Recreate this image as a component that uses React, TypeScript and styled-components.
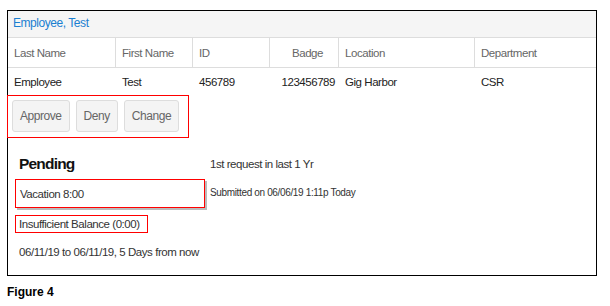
import styled, { createGlobalStyle } from "styled-components"

const GlobalStyle = createGlobalStyle`
    body {
        margin: 0;
        background: #fff;
        font-family: "Liberation Sans", Arial, sans-serif;
    }
`

const columns = [
    { label: "Last Name", value: "Employee" },
    { label: "First Name", value: "Test" },
    { label: "ID", value: "456789" },
    { label: "Badge", value: "123456789", right: true },
    { label: "Location", value: "Gig Harbor" },
    { label: "Department", value: "CSR" },
]

export default function App() {
    return (
        <Page>
            <GlobalStyle />
            <Frame>
                <Title>Employee, Test</Title>
                <Table>
                    {columns.map(col => (
                        <HeadCell key={col.label} $right={col.right}>{col.label}</HeadCell>
                    ))}
                    {columns.map(col => (
                        <DataCell key={col.label} $right={col.right}>{col.value}</DataCell>
                    ))}
                </Table>
                <Actions>
                    <ActionButton>Approve</ActionButton>
                    <ActionButton>Deny</ActionButton>
                    <ActionButton>Change</ActionButton>
                </Actions>
                <Request>
                    <Status>Pending</Status>
                    <Note>1st request in last 1 Yr</Note>
                    <TypeBox>Vacation 8:00</TypeBox>
                    <Submitted>Submitted on 06/06/19 1:11p Today</Submitted>
                    <Warning>Insufficient Balance (0:00)</Warning>
                    <Dates>06/11/19 to 06/11/19, 5 Days from now</Dates>
                </Request>
            </Frame>
            <Caption>Figure 4</Caption>
        </Page>
    )
}

// narrow look of the original font
const Narrow = `
    font-size: 11.5px;
    letter-spacing: -0.45px;
`

const Page = styled.div`
    padding: 10px 0 0 7px;
    width: 590px;
`

const Frame = styled.div`
    border: 1px solid #000;
    height: 266px;
    box-sizing: border-box;
`

const Title = styled.div`
    ${Narrow}
    background-color: #f5f5f5;
    color: #1a7fd1;
    font-size: 12px;
    height: 27px;
    padding: 5px 5px 0;
    box-sizing: border-box;
    border-bottom: 1px solid #ddd;
`

const Table = styled.div`
    ${Narrow}
    display: grid;
    grid-template-columns: 108px 77px 77px 69px 136px 1fr;
`

const HeadCell = styled.div<{ $right?: boolean }>`
    height: 30px;
    display: flex;
    align-items: center;
    justify-content: ${p => (p.$right ? "flex-end" : "flex-start")};
    padding: ${p => (p.$right ? "0 15px 0 0" : "0 0 0 6px")};
    color: #666;
    border-bottom: 1px solid #ddd;
    border-right: 1px solid #ddd;
    box-sizing: border-box;

    &:nth-child(6) {
        border-right: none;
    }
`

const DataCell = styled.div<{ $right?: boolean }>`
    height: 27px;
    display: flex;
    align-items: center;
    justify-content: ${p => (p.$right ? "flex-end" : "flex-start")};
    padding: ${p => (p.$right ? "0 4px 0 0" : "0 0 0 6px")};
    color: #222;
    box-sizing: border-box;
`

const Actions = styled.div`
    display: flex;
    gap: 6px;
    width: 182px;
    height: 43px;
    box-sizing: border-box;
    margin-left: -1px;
    padding: 4px 4px;
    border: 1px solid #f00;
`

const ActionButton = styled.button`
    ${Narrow}
    font-family: inherit;
    font-size: 12px;
    color: #666;
    background-color: #f4f4f4;
    border: 1px solid #ddd;
    border-radius: 3px;
    padding: 0 7px;
    height: 32px;
`

const Request = styled.div`
    ${Narrow}
    display: grid;
    grid-template-columns: 190px 1fr;
    column-gap: 5px;
    padding: 13px 0 0 7px;
    color: #333;
    align-items: center;
`

const Status = styled.div`
    font-weight: bold;
    font-size: 15.5px;
    letter-spacing: -0.8px;
    color: #111;
    padding-left: 4px;
    height: 26px;
    line-height: 26px;
`

const Note = styled.div`
    height: 26px;
    line-height: 26px;
`

const TypeBox = styled.div`
    border: 1px solid #f00;
    box-shadow: 2px 2px 0 #bbb;
    height: 29px;
    box-sizing: border-box;
    padding: 0 4px;
    display: flex;
    align-items: center;
    margin-top: 2px;
`

const Submitted = styled.div`
    font-size: 10px;
    letter-spacing: -0.35px;
    margin-top: -1px;
`

const Warning = styled.div`
    grid-column: 1 / -1;
    justify-self: start;
    border: 1px solid #f00;
    white-space: nowrap;
    height: 18px;
    box-sizing: border-box;
    padding: 0 7px 0 3px;
    line-height: 16px;
    margin-top: 7px;
`

const Dates = styled.div`
    grid-column: 1 / -1;
    padding: 13px 0 0 4px;
`

const Caption = styled.div`
    font-weight: bold;
    font-size: 12px;
    margin-top: 9px;
`
